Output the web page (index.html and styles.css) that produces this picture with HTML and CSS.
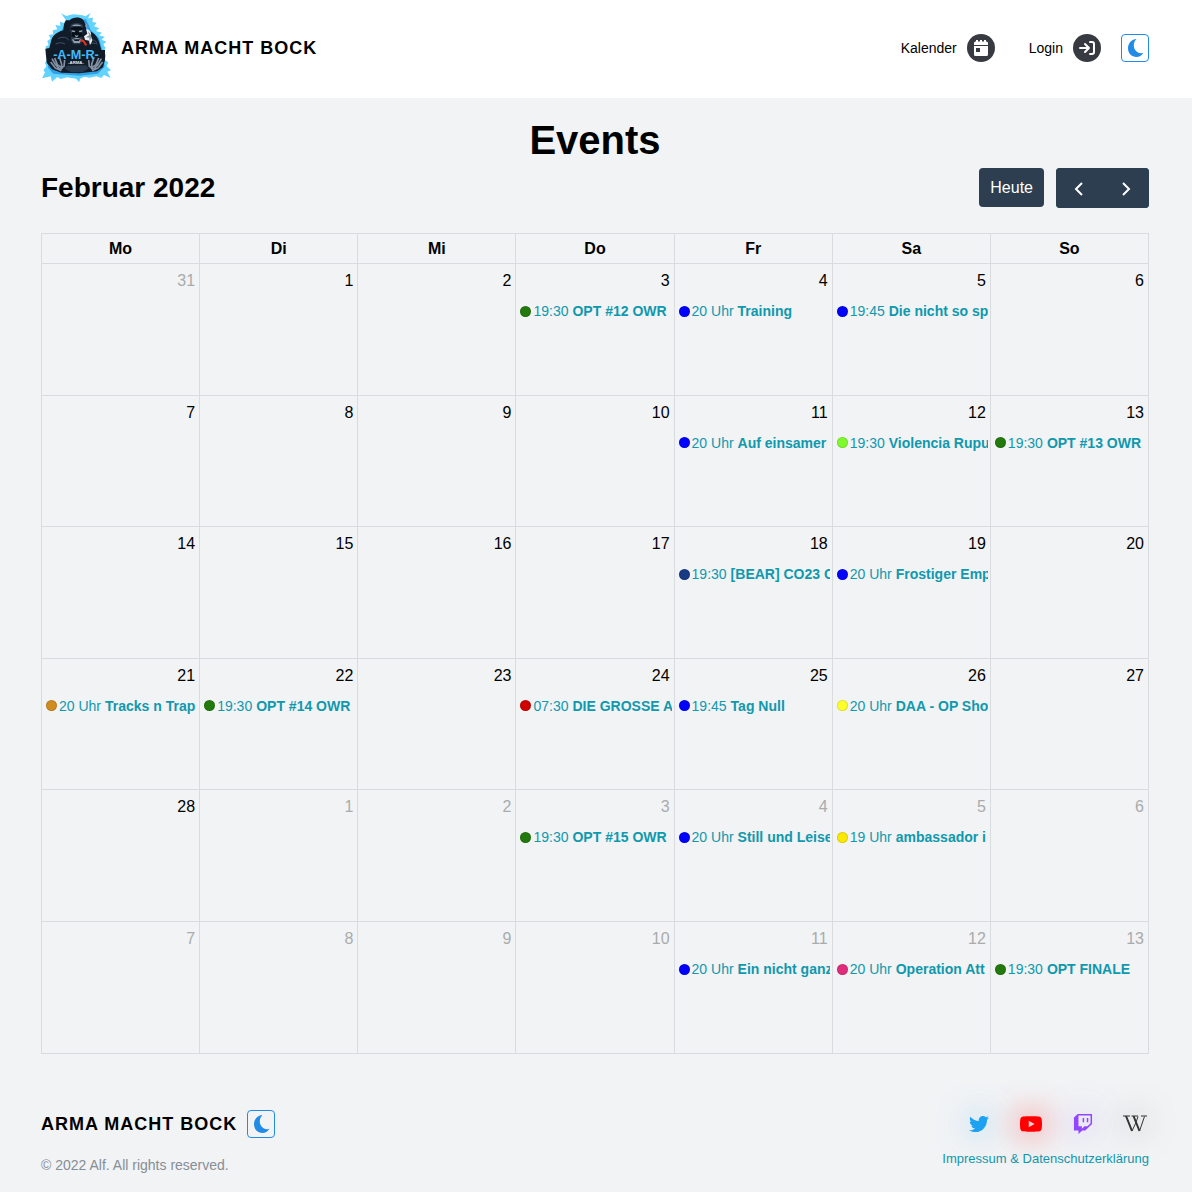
FILE: index.html
```html
<!DOCTYPE html>
<html lang="de">
<head>
<meta charset="utf-8">
<meta name="viewport" content="width=device-width, initial-scale=1">
<title>Arma macht Bock – Events</title>
<link rel="stylesheet" href="styles.css">
</head>
<body>
<svg class="sprite" aria-hidden="true">
  <symbol id="moon" viewBox="0 0 20 20"><path d="M11.500 1C8.300 4 8 9 10.400 12.200c2 2.700 5 3.600 8 2.600C16.800 17.600 14.300 19 11.400 19 6.600 19 3 15 3 10.200 3 5.200 6.700 1.300 11.500 1z"/></symbol>
</svg>

<header class="header">
  <a class="brand" href="#">
    <svg class="logo" viewBox="33 39 210 216" role="img" aria-label="AMA Arma">
      <path fill="#62d3fd" d="M107 62 93 43 109 51 119 48 132 46 146 47 158 49 166 52 182 42 174 58 189 56 187 69 200 71 192 82 208 88 198 96 216 101 207 109 224 113 215 122 229 128 220 136 226 146 222 158 228 170 224 182 235 190 230 202 243 214 232 218 242 237 222 228 214 237 199 232 178 236 163 233 150 239 148 250 138 239 111 235 92 240 82 234 66 248 62 232 36 238 45 220 40 214 49 202 45 192 52 181 47 166 53 155 46 143 56 138 52 126 62 119 56 108 70 106 68 94 82 91 76 78 91 80 90 68 103 72z"/>
      <path fill="#2f9fe8" d="M112 66 168 61 183 94 207 118 219 161 224 203 203 224 150 230 70 224 54 206 58 153 67 120 94 96z"/>
      <path fill="#121b28" d="M119 64C128 54 148 53 158 61c8 8 9 21 11 32 19 5 33 16 38 35l7 25h11v30l-6 22-18 12-52 6-55-2-28-10-16-20-4-42 12-2 6-24c5-16 22-25 36-29 1-12 1-22 8-30z"/>
      <path fill="#2b3b4e" d="M122 78c10-8 26-8 36 0l2 16-5 15 4 14-9 13h-20l-8-13 4-15-6-14z"/>
      <path fill="#071019" d="M121 87c11-5 28-5 39 0l-2 7-17-1-18 1zm5 12c8-7 23-7 29 0l3 13-16 5-16-4z"/>
      <path fill="#91a0ae" d="M125 94l11 2-2 4-8-2zm21 2 11-2-2 5-7 1zm-20 26c8-7 21-7 28 0l-5 10h-17zm8-15 6 3 6-3-4 8h-5zm-9-27c8-5 21-5 30 0l-8 1h-14z"/>
      <path fill="#101a26" d="M130 121h21l-5 5h-12z"/>
      <path fill="none" stroke="#40536a" stroke-width="3" d="M84 119c14-7 26-5 33 5m50-1c13-6 24-2 34 8M77 135c10-5 20-5 28 0m73 0c8-4 16-3 24 0"/>
      <path fill="#eef2f4" d="M170 90c11 3 15 13 13 21l4 14-7 13-3-13-12-3-3-10 10-8-3-10z"/>
      <path fill="#88969f" d="m173 96 5 12-10 7 10 1 1 13 5-14-2-9z"/>
      <path fill="none" stroke="#99a7b0" stroke-width="3" d="m172 88-5-7 4-7"/>
      <path fill="none" stroke="#e53022" stroke-width="6" d="m151 124 9 2 9 13"/>
      <path fill="#111b28" d="M56 153h168v29H56z"/>
      <path fill="none" stroke="#8191a3" stroke-width="5" stroke-linejoin="round" d="m66 179 11 19 13 13m-2-37 7 22-2 16m-19-35 8 20 16 12m6-26-2 19-9 5m-31-18 14 18 18 8M214 179l-11 19-13 13m2-37-7 22 2 16m19-35-8 20-16 12m-6-26 2 19 9 5m31-18-14 18-18 8"/>
      <path fill="#26384c" d="m111 200 57-1 9 9-20 12h-33l-20-11z"/>
      <text class="logo-main" x="138" y="181" text-anchor="middle">-A-M-R-</text>
      <text class="logo-small" x="138" y="196" text-anchor="middle">-ARMA-</text>
    </svg>
    <span class="brand-name">ARMA MACHT BOCK</span>
  </a>
  <nav class="nav">
    <a class="nav-link" href="#">Kalender
      <svg class="nav-icon" viewBox="0 0 28 28" aria-hidden="true"><circle cx="14" cy="14" r="14" fill="#373a40"/><path fill="#fff" d="M7 9q0-1.500 1.500-1.500H9V6h2v1.500h2V6h2v1.500h2V6h2v1.500h.500Q21 7.500 21 9v2H7zM7 12h14v8.500q0 1.500-1.500 1.500h-11Q7 22 7 20.500zm2 2v4h4v-4z"/></svg>
    </a>
    <a class="nav-link" href="#">Login
      <svg class="nav-icon" viewBox="0 0 28 28" aria-hidden="true"><circle cx="14" cy="14" r="14" fill="#373a40"/><path fill="none" stroke="#fff" stroke-width="2" stroke-linecap="round" stroke-linejoin="round" d="M7 14h9m-4-4 4 4-4 4m5-10h2q2 0 2 2v8q0 2-2 2h-2"/></svg>
    </a>
    <button class="theme-toggle" type="button" aria-label="Farbschema wechseln"><svg viewBox="0 0 20 20"><use href="#moon"/></svg></button>
  </nav>
</header>

<main class="main">
  <h1 class="page-title">Events</h1>
  <div class="toolbar">
    <h2 class="month">Februar 2022</h2>
    <div class="toolbar-actions">
      <button class="btn btn-today" type="button">Heute</button>
      <div class="btn-group">
        <button class="btn btn-arrow" type="button" aria-label="Zurück"><svg viewBox="0 0 16 16"><path d="M11 2 5 8l6 6"/></svg></button>
        <button class="btn btn-arrow" type="button" aria-label="Weiter"><svg viewBox="0 0 16 16"><path d="m5 2 6 6-6 6"/></svg></button>
      </div>
    </div>
  </div>
  <div class="calendar-frame">
    <table class="calendar">
      <thead><tr><th>Mo</th><th>Di</th><th>Mi</th><th>Do</th><th>Fr</th><th>Sa</th><th>So</th></tr></thead>
      <tbody>
        <tr>
          <td class="other"><span class="day">31</span></td>
          <td><span class="day">1</span></td>
          <td><span class="day">2</span></td>
          <td><span class="day">3</span><a class="event" href="#"><i class="dot green"></i><span>19:30</span> <b>OPT #12 OWR</b></a></td>
          <td><span class="day">4</span><a class="event" href="#"><i class="dot blue"></i><span>20 Uhr</span> <b>Training</b></a></td>
          <td><span class="day">5</span><a class="event" href="#"><i class="dot blue"></i><span>19:45</span> <b>Die nicht so sp</b></a></td>
          <td><span class="day">6</span></td>
        </tr>
        <tr>
          <td><span class="day">7</span></td>
          <td><span class="day">8</span></td>
          <td><span class="day">9</span></td>
          <td><span class="day">10</span></td>
          <td><span class="day">11</span><a class="event" href="#"><i class="dot blue"></i><span>20 Uhr</span> <b>Auf einsamer</b></a></td>
          <td><span class="day">12</span><a class="event" href="#"><i class="dot lime"></i><span>19:30</span> <b>Violencia Rupu</b></a></td>
          <td><span class="day">13</span><a class="event" href="#"><i class="dot green"></i><span>19:30</span> <b>OPT #13 OWR</b></a></td>
        </tr>
        <tr>
          <td><span class="day">14</span></td>
          <td><span class="day">15</span></td>
          <td><span class="day">16</span></td>
          <td><span class="day">17</span></td>
          <td><span class="day">18</span><a class="event" href="#"><i class="dot navy"></i><span>19:30</span> <b>[BEAR] CO23 O</b></a></td>
          <td><span class="day">19</span><a class="event" href="#"><i class="dot blue"></i><span>20 Uhr</span> <b>Frostiger Emp</b></a></td>
          <td><span class="day">20</span></td>
        </tr>
        <tr>
          <td><span class="day">21</span><a class="event" href="#"><i class="dot ochre"></i><span>20 Uhr</span> <b>Tracks n Trap</b></a></td>
          <td><span class="day">22</span><a class="event" href="#"><i class="dot green"></i><span>19:30</span> <b>OPT #14 OWR</b></a></td>
          <td><span class="day">23</span></td>
          <td><span class="day">24</span><a class="event" href="#"><i class="dot red"></i><span>07:30</span> <b>DIE GROSSE A</b></a></td>
          <td><span class="day">25</span><a class="event" href="#"><i class="dot blue"></i><span>19:45</span> <b>Tag Null</b></a></td>
          <td><span class="day">26</span><a class="event" href="#"><i class="dot yellow"></i><span>20 Uhr</span> <b>DAA - OP Sho</b></a></td>
          <td><span class="day">27</span></td>
        </tr>
        <tr>
          <td><span class="day">28</span></td>
          <td class="other"><span class="day">1</span></td>
          <td class="other"><span class="day">2</span></td>
          <td class="other"><span class="day">3</span><a class="event" href="#"><i class="dot green"></i><span>19:30</span> <b>OPT #15 OWR</b></a></td>
          <td class="other"><span class="day">4</span><a class="event" href="#"><i class="dot blue"></i><span>20 Uhr</span> <b>Still und Leise</b></a></td>
          <td class="other"><span class="day">5</span><a class="event" href="#"><i class="dot gold"></i><span>19 Uhr</span> <b>ambassador i</b></a></td>
          <td class="other"><span class="day">6</span></td>
        </tr>
        <tr>
          <td class="other"><span class="day">7</span></td>
          <td class="other"><span class="day">8</span></td>
          <td class="other"><span class="day">9</span></td>
          <td class="other"><span class="day">10</span></td>
          <td class="other"><span class="day">11</span><a class="event" href="#"><i class="dot blue"></i><span>20 Uhr</span> <b>Ein nicht ganz</b></a></td>
          <td class="other"><span class="day">12</span><a class="event" href="#"><i class="dot pink"></i><span>20 Uhr</span> <b>Operation Att</b></a></td>
          <td class="other"><span class="day">13</span><a class="event" href="#"><i class="dot green"></i><span>19:30</span> <b>OPT FINALE</b></a></td>
        </tr>
      </tbody>
    </table>
  </div>
</main>

<footer class="footer">
  <div class="footer-brand">
    <div class="footer-name">
      <span class="brand-name">ARMA MACHT BOCK</span>
      <button class="theme-toggle" type="button" aria-label="Farbschema wechseln"><svg viewBox="0 0 20 20"><use href="#moon"/></svg></button>
    </div>
    <p class="copyright">© 2022 Alf. All rights reserved.</p>
  </div>
  <div class="footer-links">
    <div class="social">
      <a class="social-link twitter" href="#" aria-label="Twitter"><svg viewBox="0 0 512 512"><path d="M459.37 151.716c.325 4.548.325 9.097.325 13.645 0 138.72-105.583 298.558-298.558 298.558-59.452 0-114.68-17.219-161.137-47.106 8.447.974 16.568 1.299 25.34 1.299 49.055 0 94.213-16.568 130.274-44.832-46.132-.975-84.792-31.188-98.112-72.772 6.498.974 12.995 1.624 19.818 1.624 9.421 0 18.843-1.3 27.614-3.573-48.081-9.747-84.143-51.98-84.143-102.985v-1.299c13.969 7.797 30.214 12.67 47.431 13.319-28.264-18.843-46.781-51.005-46.781-87.391 0-19.492 5.197-37.36 14.294-52.954 51.655 63.675 129.3 105.258 216.365 109.807-1.624-7.797-2.599-15.918-2.599-24.04 0-57.828 46.782-104.934 104.934-104.934 30.213 0 57.502 12.67 76.67 33.137 23.715-4.548 46.456-13.32 66.599-25.34-7.798 24.366-24.366 44.833-46.132 57.827 21.117-2.273 41.584-8.122 60.426-16.243-14.292 20.791-32.161 39.308-52.628 54.253z"/></svg></a>
      <a class="social-link youtube" href="#" aria-label="YouTube"><svg viewBox="15 64 546 384"><path d="M549.655 124.083c-6.281-23.65-24.787-42.276-48.284-48.597C458.781 64 288 64 288 64S117.22 64 74.629 75.486c-23.497 6.322-42.003 24.947-48.284 48.597-11.412 42.867-11.412 132.305-11.412 132.305s0 89.438 11.412 132.305c6.281 23.65 24.787 41.5 48.284 47.821C117.22 448 288 448 288 448s170.78 0 213.371-11.486c23.497-6.321 42.003-24.171 48.284-47.821 11.412-42.867 11.412-132.305 11.412-132.305s0-89.438-11.412-132.305zm-317.51 213.508V175.185l142.739 81.205-142.739 81.201z"/></svg></a>
      <a class="social-link twitch" href="#" aria-label="Twitch"><svg viewBox="0 0 512 512"><path d="M391.17 103.47H352.54v109.7h38.63ZM285 103H246.37V212.75H285ZM120.83 0 24.31 91.42V420.58H140.14V512l96.53-91.42h77.25L487.69 256V0ZM449.07 237.75l-77.22 73.120H294.61l-67.600 64v-64H140.14V36.580H449.07Z"/></svg></a>
      <a class="social-link wiki" href="#" aria-label="Wikipedia"><svg viewBox="0 0 24 18"><g fill="none" stroke="currentColor"><path d="M0 1h7M8.500 1h6.500M18 1h6" stroke-width="1"/><path d="m3 1 6 15M10.500 1l6 15" stroke-width="2"/><path d="m9 16 4-8.500L15 1.500M16.500 16l5-14.500" stroke-width="1"/></g></svg></a>
    </div>
    <a class="imprint" href="#">Impressum &amp; Datenschutzerklärung</a>
  </div>
</footer>
</body>
</html>
```
FILE: styles.css
```css
* {
  box-sizing: border-box;
}

body {
  margin: 0;
  background: #f1f3f5;
  color: #000;
  font-family: "Liberation Sans", Arial, sans-serif;
  font-size: 16px;
  line-height: 24px;
}

a {
  color: inherit;
  text-decoration: none;
}

button {
  font: inherit;
  cursor: pointer;
}

h1,
h2,
p {
  margin: 0;
}

.sprite {
  display: none;
}

/* Header */
.header {
  display: flex;
  align-items: center;
  justify-content: space-between;
  padding: 12px 43px 14px 41px;
  background: #fff;
}

.brand {
  display: flex;
  align-items: center;
  gap: 10px;
}

.logo {
  width: 70px;
  height: 72px;
}

.logo-main {
  fill: #43b9f5;
  font-family: "Liberation Sans Narrow", "Liberation Sans", sans-serif;
  font-size: 38px;
  font-weight: bold;
}

.logo-small {
  fill: #e3e8ec;
  font-size: 13px;
  font-weight: bold;
}

.brand-name {
  font-size: 18px;
  font-weight: bold;
  letter-spacing: 1px;
}

.nav {
  display: flex;
  align-items: center;
  gap: 20px;
  font-size: 14px;
}

.nav-link {
  display: flex;
  align-items: center;
  gap: 10px;
}

.nav-link + .nav-link {
  margin-left: 14px;
}

.nav-icon {
  width: 28px;
  height: 28px;
}

.theme-toggle {
  display: flex;
  align-items: center;
  justify-content: center;
  width: 28px;
  height: 28px;
  padding: 0;
  border: 1px solid #228be6;
  border-radius: 4px;
  background: transparent;
  color: #228be6;
}

.theme-toggle svg {
  width: 20px;
  height: 20px;
  fill: currentColor;
}

/* Calendar */
.main {
  padding: 18px 43px 0 41px;
}

.page-title {
  margin-bottom: 4px;
  font-size: 40px;
  line-height: 48px;
  text-align: center;
}

.toolbar {
  display: flex;
  align-items: center;
  justify-content: space-between;
  margin-bottom: 25px;
}

.month {
  font-size: 28px;
  line-height: 40px;
}

.toolbar-actions {
  display: flex;
  align-items: flex-start;
  gap: 12px;
}

.btn {
  border: 0;
  border-radius: 4px;
  background: #2c3e50;
  color: #fff;
}

.btn-today {
  height: 39px;
  padding: 0 11px;
}

.btn-group {
  display: flex;
  gap: 1px;
  border-radius: 4px;
  background: #2c3e50;
}

.btn-arrow {
  display: flex;
  align-items: center;
  justify-content: center;
  height: 40px;
  padding: 2px 15px 0;
}

.btn-arrow svg {
  width: 16px;
  height: 16px;
  fill: none;
  stroke: currentColor;
  stroke-width: 2;
}

.calendar-frame {
  display: grid;
  aspect-ratio: 1.35;
}

.calendar {
  width: 100%;
  height: 100%;
  border-collapse: collapse;
  table-layout: fixed;
}

.calendar th,
.calendar td {
  border: 1px solid #d9dcdf;
}

.calendar th {
  height: 30px;
  padding: 0;
}

.calendar td {
  padding: 5px 2px 0;
  vertical-align: top;
}

.day {
  display: block;
  padding-right: 2px;
  text-align: right;
}

.other .day {
  color: #a9abac;
}

.event {
  display: flex;
  align-items: center;
  gap: 4px;
  margin-top: 7px;
  padding-left: 2px;
  overflow: hidden;
  color: #1098ad;
  font-size: 14px;
  line-height: 22px;
  white-space: nowrap;
}

.dot {
  flex: none;
  width: 11px;
  height: 11px;
  margin-right: -2px;
  border: 1px solid rgb(0 0 0 / 12%);
  border-radius: 50%;
}

.green { background: #237a0c; }
.blue { background: #00f; }
.lime { background: #7dfb2c; }
.navy { background: #173a85; }
.ochre { background: #d08c20; }
.red { background: #d00000; }
.yellow { background: #ffff29; }
.gold { background: #fbe900; }
.pink { background: #e12c7c; }

/* Footer */
.footer {
  display: flex;
  justify-content: space-between;
  padding: 56px 43px 14px 41px;
}

.footer-name {
  display: flex;
  align-items: center;
  gap: 10px;
}

.copyright {
  margin-top: 15px;
  color: #868e96;
  font-size: 14px;
}

.footer-links {
  display: flex;
  flex-direction: column;
  align-items: flex-end;
  gap: 9px;
}

.social {
  display: flex;
  gap: 24px;
}

.social-link {
  display: flex;
  align-items: center;
  justify-content: center;
  width: 28px;
  height: 28px;
}

.social-link svg {
  width: 20px;
  height: 20px;
  fill: currentColor;
}

/* Soft glow in the brand colour behind each icon */
.twitter {
  color: #1da1f2;
  filter: drop-shadow(0 0 16px rgb(29 161 242 / 60%));
}

.youtube {
  color: #f00;
  filter: drop-shadow(0 0 16px rgb(255 0 0 / 80%));
}

.youtube svg {
  width: 22px;
}

.twitch {
  color: #9146ff;
  filter: drop-shadow(0 0 16px rgb(145 70 255 / 60%));
}

.wiki {
  color: #333;
  filter: drop-shadow(0 0 16px rgb(0 0 0 / 60%));
}

.wiki svg {
  width: 24px;
  height: 18px;
}

.imprint {
  color: #1098ad;
  font-size: 13px;
}
```
